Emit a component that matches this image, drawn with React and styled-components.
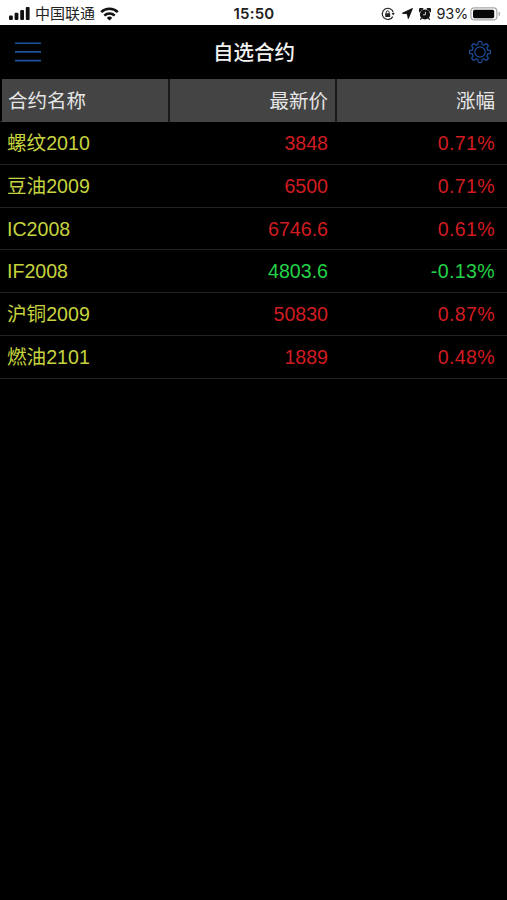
import styled, { createGlobalStyle } from 'styled-components';

const GlobalStyle = createGlobalStyle`
  * {
    box-sizing: border-box;
  }
  body {
    margin: 0;
    background-color: #000;
    font-family: 'Liberation Sans', 'Noto Sans CJK SC', sans-serif;
  }
`;

const colors = {
  rise: '#d01c20',
  fall: '#22d348',
  name: '#c6d33e',
  blue: '#1f509f',
};

const Screen = styled.div`
  width: 507px;
  height: 900px;
  background-color: #000;
  overflow: hidden;
`;

const StatusBar = styled.div`
  display: grid;
  grid-template-columns: 1fr auto 1fr;
  align-items: center;
  height: 25px;
  padding: 2px 6px 0 9px;
  background-color: #fff;
  color: #222;
  white-space: nowrap;

  svg {
    display: block;
    flex: none;
  }
`;

const StatusGroup = styled.div`
  display: flex;
  align-items: center;
  justify-content: ${({ $end }) => ($end ? 'flex-end' : 'flex-start')};
`;

const StatusGap = styled.span`
  width: ${({ $width }) => $width}px;
`;

const Carrier = styled.span`
  margin: 0 5px 0 5px;
  font-size: 15px;
  line-height: 22px;
`;

const Clock = styled.span`
  margin-right: 2px;
  font-family: Inter, sans-serif;
  font-size: 15px;
  font-weight: 600;
  letter-spacing: 0.2px;
  line-height: 22px;
`;

const Percent = styled.span`
  margin: 0 2px 0 5px;
  font-family: Inter, sans-serif;
  font-size: 14.5px;
  letter-spacing: -0.2px;
  line-height: 22px;
`;

const NavBar = styled.header`
  display: grid;
  grid-template-columns: 1fr auto 1fr;
  align-items: center;
  height: 54px;
  padding: 0 15px 1px 15px;

  svg {
    display: block;
  }
  .setting {
    justify-self: end;
  }
`;

const Title = styled.h1`
  margin: 0;
  padding: 3px 0 0 1px;
  color: #f2f2f2;
  font-size: 20.5px;
  font-weight: 500;
  line-height: 30px;
`;

const TableHead = styled.div`
  display: grid;
  grid-template-columns: 168px 167px 1fr;
  height: 43px;
  padding-left: 2px;
  border-bottom: 1px solid #2c2c2c;
`;

const HeadCell = styled.div`
  padding: 1px ${({ $last }) => ($last ? 12 : 7)}px 0 6px;
  border-right: ${({ $last }) => ($last ? 0 : 2)}px solid #191919;
  background-color: #444;
  color: #e6e6e6;
  font-size: 19.5px;
  line-height: 42px;
  text-align: ${({ $right }) => ($right ? 'right' : 'left')};
`;

const Row = styled.div`
  display: grid;
  grid-template-columns: 168px 160px 1fr;
  height: 42.8px;
  padding-right: 12px;
  border-bottom: 1px solid #222;
  font-size: 19.6px;
  line-height: 42px;
`;

const Name = styled.span`
  padding-left: 7px;
  color: ${colors.name};
`;

const Value = styled.span`
  color: ${({ $fall }) => ($fall ? colors.fall : colors.rise)};
  text-align: right;
`;

const Rate = styled(Value)`
  letter-spacing: 0.35px;
`;

const contracts = [
  { name: '螺纹2010', price: '3848', rate: '0.71%' },
  { name: '豆油2009', price: '6500', rate: '0.71%' },
  { name: 'IC2008', price: '6746.6', rate: '0.61%' },
  { name: 'IF2008', price: '4803.6', rate: '-0.13%' },
  { name: '沪铜2009', price: '50830', rate: '0.87%' },
  { name: '燃油2101', price: '1889', rate: '0.48%' },
];

const SignalIcon = () => (
  <svg width="21" height="13" viewBox="0 0 21 13" fill="#111">
    <rect x="0" y="8.5" width="3.8" height="4.5" rx="1" />
    <rect x="5.6" y="5.8" width="3.8" height="7.2" rx="1" />
    <rect x="11.2" y="3" width="3.8" height="10" rx="1" />
    <rect x="16.8" y="0" width="3.8" height="13" rx="1" />
  </svg>
);

const WifiIcon = () => (
  <svg width="19" height="14" viewBox="0 0 19 14" fill="none" stroke="#111" strokeWidth="2.5">
    <path d="M1.2 5.2a11.8 11.8 0 0 1 16.6 0" />
    <path d="M4.3 8.6a7.4 7.4 0 0 1 10.4 0" />
    <path d="M9.5 13.6 6.8 10.9a3.9 3.9 0 0 1 5.4 0z" fill="#111" stroke="none" />
  </svg>
);

const LockIcon = () => (
  <svg width="14" height="14" viewBox="0 0 14 14" fill="none" stroke="#222" strokeWidth="1.2">
    <path d="M11.8 9.6A5.6 5.6 0 1 1 12.3 5.4" />
    <path d="M10.6 6h3.2l-1.6 2.6z" fill="#222" stroke="none" />
    <rect x="4.2" y="6.3" width="5" height="3.8" rx="0.5" fill="#222" stroke="none" />
    <path d="M5.2 6.5V5.4a1.5 1.5 0 0 1 3 0v1.1" strokeWidth="1" />
  </svg>
);

const LocationIcon = () => (
  <svg width="11" height="11" viewBox="0 0 11 11" fill="#111">
    <path d="M10.4.5 6.3 10.5 5.4 5.8.5 5.2z" stroke="#111" strokeWidth="1" strokeLinejoin="round" />
  </svg>
);

const AlarmIcon = () => (
  <svg width="12" height="12" viewBox="0 0 12 12">
    <circle cx="6" cy="6.5" r="5.1" fill="#111" />
    <path d="M.6 3.6A2.1 2.1 0 0 1 3.7.8zM11.4 3.6A2.1 2.1 0 0 0 8.3.8zM2.7 9.8 1.3 11.6M9.3 9.8l1.4 1.8" fill="#111" stroke="#111" strokeWidth="1.2" />
    <path d="M6.4 3.8v3H4" fill="none" stroke="#fff" strokeWidth="0.8" />
  </svg>
);

const BatteryIcon = () => (
  <svg width="31" height="14" viewBox="0 0 31 14">
    <rect x="0.9" y="0.9" width="26" height="12" rx="3.5" fill="none" stroke="#a8a8a8" strokeWidth="1.2" />
    <rect x="3" y="2.7" width="21.2" height="8.5" rx="1.6" fill="#080808" />
    <path d="M28.6 4.6c2 .8 2 4 0 4.8z" fill="#a8a8a8" />
  </svg>
);

const MenuIcon = () => (
  <svg width="26" height="20" viewBox="0 0 26 20" stroke={colors.blue} strokeWidth="1.6">
    <path d="M0 1.3h26M0 9.9h26M0 18.6h26" />
  </svg>
);

// 톱니 8개
const gearPath = (() => {
  const point = (radius, deg) => {
    const rad = (deg * Math.PI) / 180;
    return `${(12 + radius * Math.sin(rad)).toFixed(2)} ${(12 - radius * Math.cos(rad)).toFixed(2)}`;
  };
  let d = '';
  for (let i = 0; i < 8; i += 1) {
    const a = i * 45;
    d += `${i ? 'L' : 'M'}${point(8, a - 14)}L${point(10.4, a - 9)}`;
    d += `Q${point(10.8, a)} ${point(10.4, a + 9)}L${point(8, a + 14)}`;
    d += `Q${point(7.7, a + 22.5)} ${point(8, a + 31)}`;
  }
  return `${d}Z`;
})();

const GearIcon = () => (
  <svg className="setting" width="24" height="24" viewBox="0 0 24 24" fill="none" stroke={colors.blue} strokeWidth="1.2" strokeLinejoin="round">
    <path d={gearPath} />
    <circle cx="12" cy="12" r="5.2" />
  </svg>
);

const App = () => {
  return (
    <Screen>
      <GlobalStyle />
      <StatusBar>
        <StatusGroup>
          <SignalIcon />
          <Carrier>中国联通</Carrier>
          <WifiIcon />
        </StatusGroup>
        <Clock>15:50</Clock>
        <StatusGroup $end>
          <LockIcon />
          <StatusGap $width={7} />
          <LocationIcon />
          <StatusGap $width={6} />
          <AlarmIcon />
          <Percent>93%</Percent>
          <BatteryIcon />
        </StatusGroup>
      </StatusBar>
      <NavBar>
        <MenuIcon />
        <Title>自选合约</Title>
        <GearIcon />
      </NavBar>
      <TableHead>
        <HeadCell>合约名称</HeadCell>
        <HeadCell $right>最新价</HeadCell>
        <HeadCell $right $last>
          涨幅
        </HeadCell>
      </TableHead>
      {contracts.map(({ name, price, rate }) => (
        <Row key={name}>
          <Name>{name}</Name>
          <Value $fall={rate.startsWith('-')}>{price}</Value>
          <Rate $fall={rate.startsWith('-')}>{rate}</Rate>
        </Row>
      ))}
    </Screen>
  );
};

export default App;
